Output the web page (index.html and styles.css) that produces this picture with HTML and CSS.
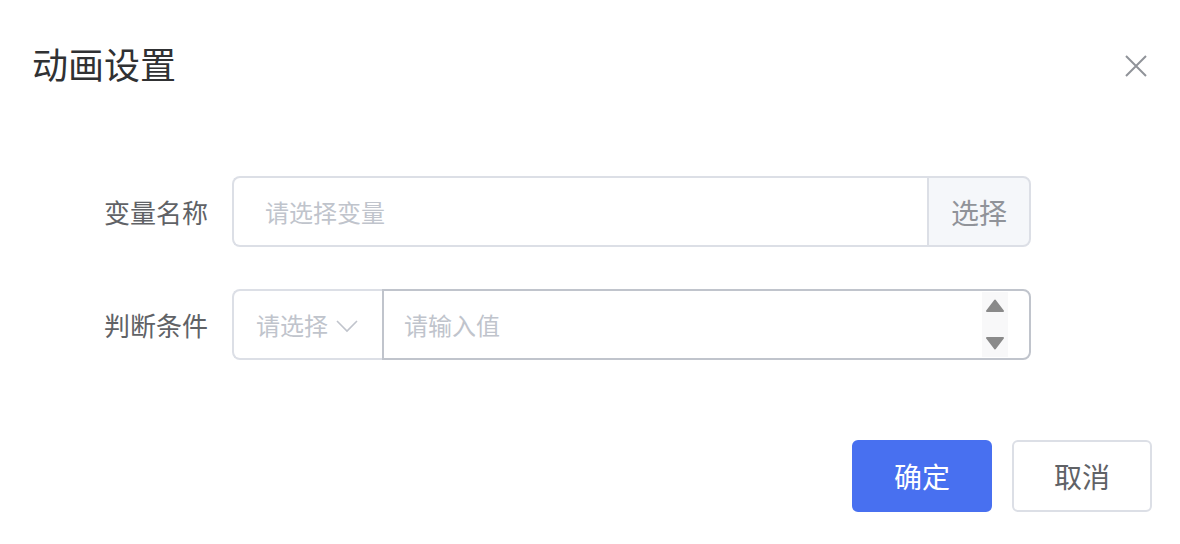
FILE: index.html
```html
<!DOCTYPE html>
<html lang="zh">
<head>
<meta charset="utf-8">
<link rel="stylesheet" href="styles.css">
</head>
<body>
<div class="dialog">
  <div class="header">
    <div class="title">动画设置</div>
    <svg class="close" width="22" height="22" viewBox="0 0 22 22"><path d="M1 1L21 21M21 1L1 21" stroke="#909399" stroke-width="2" fill="none"/></svg>
  </div>
  <div class="form">
    <div class="row">
      <div class="label">变量名称</div>
      <div class="group">
        <div class="input1"><span class="ph">请选择变量</span></div>
        <div class="append">选择</div>
      </div>
    </div>
    <div class="row">
      <div class="label">判断条件</div>
      <div class="group">
        <div class="select"><span class="ph">请选择</span>
          <svg class="chev" width="22" height="14" viewBox="0 0 22 14"><path d="M1 2L11 12L21 2" stroke="#c0c4cc" stroke-width="1.6" fill="none"/></svg>
        </div>
        <div class="input2"><span class="ph">请输入值</span>
          <div class="spin">
            <svg width="18" height="13" viewBox="0 0 18 13"><path d="M9 1.5L17 12H1Z" fill="#8a8a8a" stroke="#8a8a8a" stroke-width="2" stroke-linejoin="round"/></svg>
            <svg width="18" height="13" viewBox="0 0 18 13"><path d="M1 1H17L9 11.5Z" fill="#8a8a8a" stroke="#8a8a8a" stroke-width="2" stroke-linejoin="round"/></svg>
          </div>
        </div>
      </div>
    </div>
  </div>
  <div class="footer">
    <button class="btn primary">确定</button>
    <button class="btn">取消</button>
  </div>
</div>
</body>
</html>
```
FILE: styles.css
```css
html, body { margin: 0; padding: 0; background: #fff; }
body { font-family: "Noto Sans CJK SC", "Noto Sans", sans-serif; }
.dialog { width: 1180px; height: 544px; box-sizing: border-box; }
.header { display: flex; justify-content: space-between; align-items: center; padding: 40px 33px 0 32px; height: 46px; }
.title { font-size: 36px; line-height: 46px; color: #303133; }
.close { display: block; margin-top: 6px; }
.form { margin-top: 90px; display: flex; flex-direction: column; gap: 42px; }
.row { display: flex; align-items: center; height: 71px; }
.label { width: 208px; text-align: right; font-size: 26px; color: #606266; padding-right: 24px; box-sizing: content-box; }
.group { display: flex; width: 799px; height: 71px; }
.ph { color: #c0c4cc; font-size: 24px; }
.input1 { flex: 1; border: 2px solid #dcdfe6; border-right: none; border-radius: 8px 0 0 8px; display: flex; align-items: center; padding-left: 31px; }
.append { width: 100px; border: 2px solid #dcdfe6; border-radius: 0 8px 8px 0; background: #f5f7fa; color: #909399; font-size: 28px; display: flex; align-items: center; justify-content: center; }
.select { width: 150px; box-sizing: border-box; border: 2px solid #dcdfe6; border-right: none; border-radius: 8px 0 0 8px; display: flex; align-items: center; padding-left: 22px; gap: 8px; }
.chev { margin-top: 2px; }
.input2 { flex: 1; border: 2px solid #c0c4cc; border-radius: 0 8px 8px 0; display: flex; align-items: center; padding-left: 20px; position: relative; }
.spin { position: absolute; right: 21px; top: 1px; bottom: 1px; width: 26px; background: #f8f8f9; display: flex; flex-direction: column; justify-content: space-between; align-items: center; padding: 7px 0; box-sizing: border-box; }
.spin svg { display: block; }
.footer { display: flex; justify-content: flex-end; gap: 20px; padding-right: 28px; margin-top: 80px; }
.btn { width: 140px; height: 72px; border-radius: 6px; border: 2px solid #dcdfe6; background: #fff; color: #606266; font-family: inherit; font-size: 28px; padding: 0; }
.btn.primary { background: #4870f0; border-color: #4870f0; color: #fff; }
```
